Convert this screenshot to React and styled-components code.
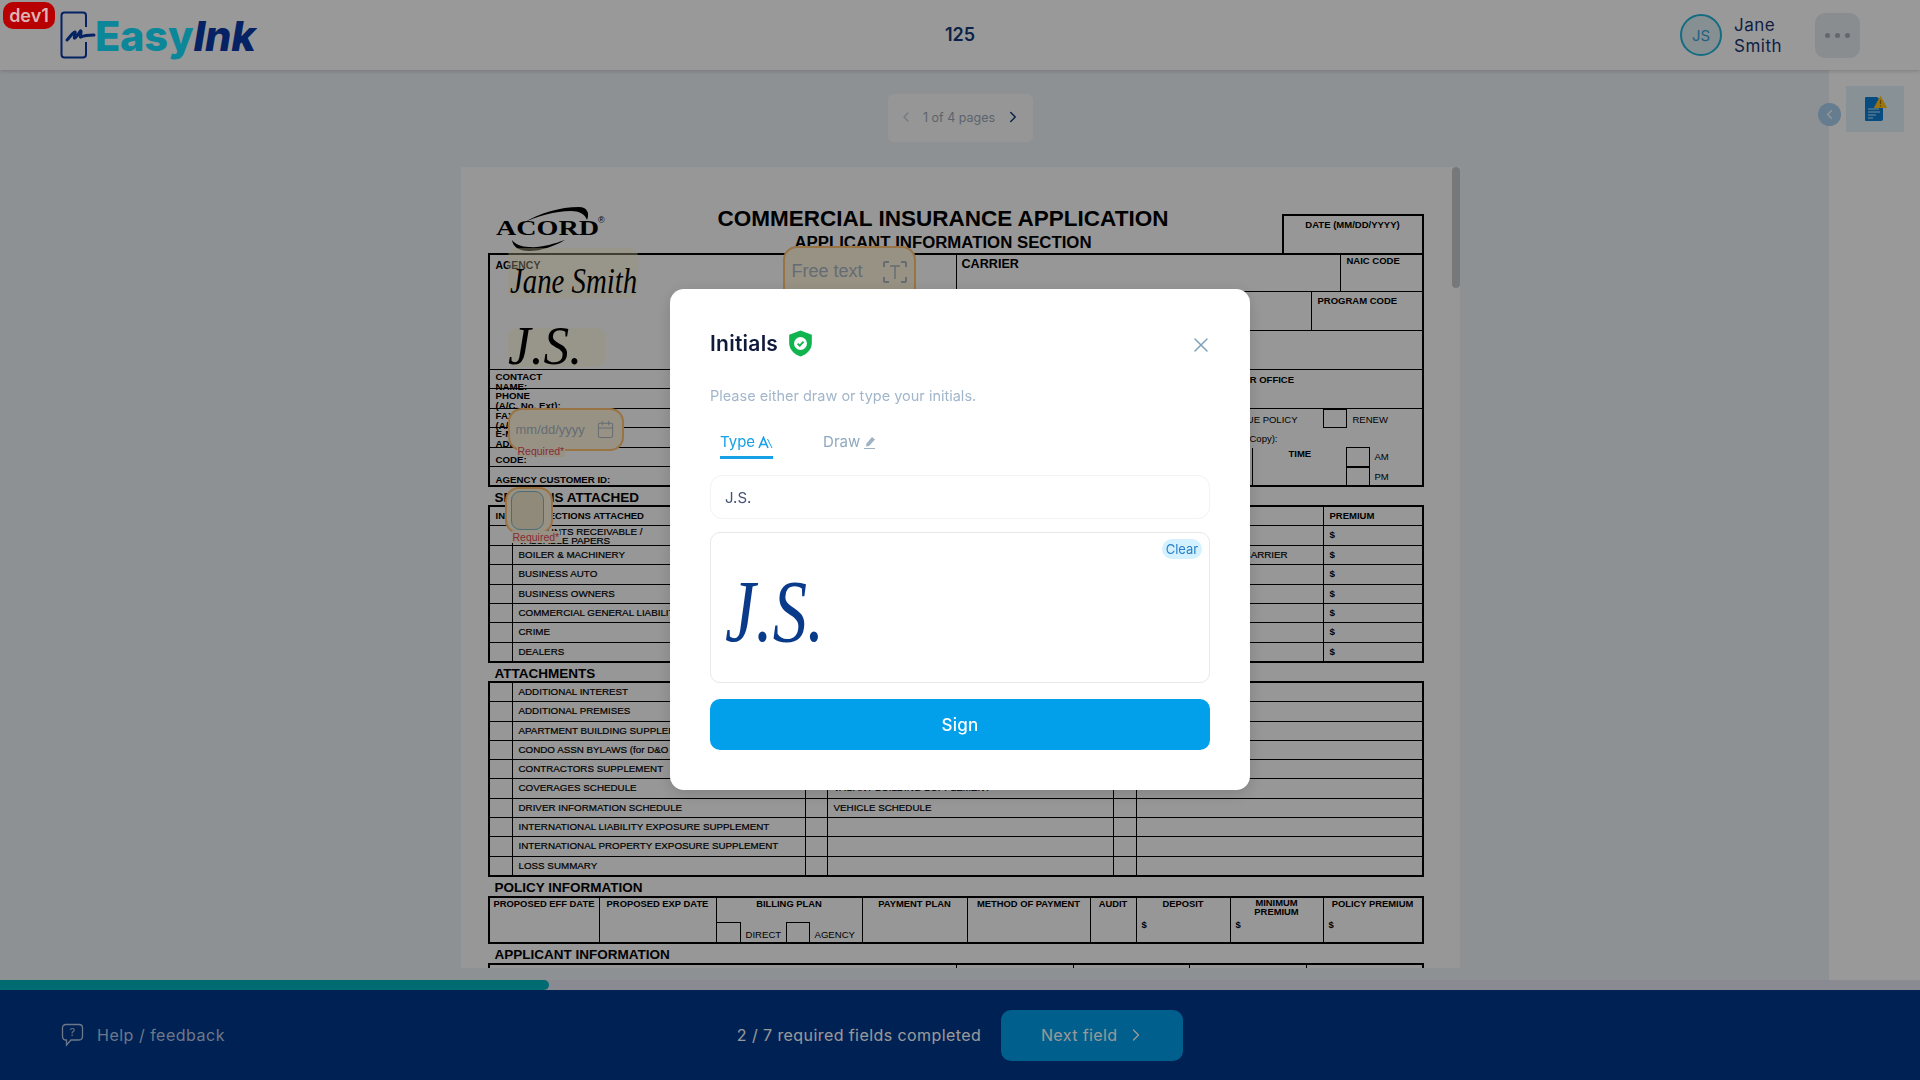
import React from 'react';
import styled, { createGlobalStyle } from 'styled-components';
import { ChevronLeft, ChevronRight, Calendar, X } from 'lucide-react';

const Global = createGlobalStyle`
  * { box-sizing: border-box; }
  html, body { margin: 0; padding: 0; height: 100%; overflow: hidden; }
  body { font-family: Inter, "Noto Sans", sans-serif; }
`;

const Shell = styled.div`
  width: 1920px; height: 1080px; display: flex; flex-direction: column; background: #edf2f7; position: relative;
`;
const Header = styled.header`
  height: 70px; flex: none; background: #fff; display: grid; grid-template-columns: 1fr auto 1fr; align-items: center;
  box-shadow: 0 1px 4px rgba(0,0,0,.18); position: relative; z-index: 1; padding: 0 60px 0 60px;
`;
const DevBadge = styled.div`
  position: absolute; left: 3px; top: 2px; width: 52px; height: 27px; border-radius: 10px; background: #b80000;
  color: #dcb4b4; font-size: 18px; font-weight: 600; display: flex; align-items: center; justify-content: center; z-index: 30;
`;
const Brand = styled.div`display: flex; align-items: center; gap: 0;`;
const BrandText = styled.div`
  font-size: 41.5px; font-weight: 800; line-height: 46px; color: #14e0ff; letter-spacing: -.2px; margin: 1px 0 0 -1px;
  em { color: #083aa7; font-style: italic; }
`;
const DocNumber = styled.div`font-size: 18px; font-weight: 600; color: #143a78; margin-top: -1px;`;
const UserArea = styled.div`display: flex; align-items: center; justify-content: flex-end;`;
const Avatar = styled.div`
  width: 42px; height: 42px; border-radius: 50%; border: 2.5px solid #22b4d8; background: #dff0f6; color: #3aa0d8;
  font-size: 15px; display: flex; align-items: center; justify-content: center;
`;
const UserName = styled.div`
  margin: 2px 0 0 12px; width: 81px; font-size: 17px; line-height: 21px; color: #1a3570; letter-spacing: .5px;
`;
const MoreButton = styled.div`
  width: 45px; height: 45px; border-radius: 10px; background: #e6ebf1; display: flex; align-items: center; justify-content: center; gap: 5px;
  span { width: 5px; height: 5px; border-radius: 50%; background: #a3adb8; }
`;

const Body = styled.div`flex: 1; min-height: 0; display: grid; grid-template-columns: 1fr 91px;`;
const Main = styled.main`
  padding: 24px 0 0 91px; display: flex; flex-direction: column; align-items: center; min-width: 0;
`;
const Pager = styled.div`
  width: 145px; height: 48px; border-radius: 6px; background: #fafbfc; display: flex; align-items: center; justify-content: center; gap: 9px;
  color: #9aa6b4; font-size: 12.5px; flex: none; padding-bottom: 2px;
`;
const Viewport = styled.div`
  margin-top: 25px; width: 999px; height: 801px; display: flex; flex: none; overflow: hidden;
`;
const Sheet = styled.div`
  width: 991px; height: 1400px; background: #fcfcfc; padding: 38px 28px 0 27px; position: relative; flex: none;
  font-family: "Liberation Sans", Arial, sans-serif; color: #000;
`;
const ScrollTrack = styled.div`width: 8px; background: #fcfcfc; flex: none;`;
const ScrollThumb = styled.div`width: 8px; height: 121px; border-radius: 4px; background: #c6c8cb;`;

const TitleBand = styled.div`display: flex; height: 48px; align-items: flex-start;`;
const LogoWrap = styled.div`margin-left: 7px; width: 112px; flex: none;`;
const TitleBlock = styled.div`margin-left: 111px; width: 451px; text-align: center; flex: none; padding-top: 2px;`;
const Title = styled.div`font-size: 22.5px; font-weight: 700; line-height: 24px; white-space: nowrap;`;
const Subtitle = styled.div`font-size: 16.8px; font-weight: 700; line-height: 20px; margin-top: 2px; white-space: nowrap;`;
const DateBox = styled.div`
  margin-left: auto; width: 142px; height: 39px; margin-top: 9px; border: 2px solid #000; border-bottom: 0;
  font-size: 9.5px; font-weight: 700; text-align: center; padding-top: 3px;
`;

const AgencyGrid = styled.div`
  display: grid; grid-template-columns: 467px 1fr; height: 234px; border: 2px solid #000;
`;
const AgencyLeft = styled.div`display: flex; flex-direction: column; border-right: 1px solid #000;`;
const AgencyRight = styled.div`display: flex; flex-direction: column;`;
const LeftRow = styled.div`
  height: ${p => p.$h}px; flex: none; padding: ${p => p.$pad || 1}px 0 0 6px; font-size: ${p => p.$size || 9.7}px; font-weight: 700; line-height: 9.5px;
  border-bottom: ${p => (p.$last ? 0 : 1)}px solid #000;
`;
const RightRow = styled.div`
  height: ${p => p.$h}px; flex: none; display: flex; border-bottom: 1px solid #000;
`;
const RightCell = styled.div`
  width: ${p => p.$w ? `${p.$w}px` : 'auto'}; flex: ${p => p.$w ? 'none' : 1}; padding: ${p => p.$top ?? 2}px 0 0 ${p => p.$left || 5}px;
  font-weight: 700; font-size: ${p => p.$size || 9.5}px; white-space: nowrap; border-right: ${p => (p.$line ? 1 : 0)}px solid #000;
`;
const StatusRow = styled.div`display: flex; height: ${p => p.$h}px; flex: none; font-size: 9.5px;`;
const StatusText = styled.div`width: ${p => p.$w}px; text-align: right; padding-top: 5px; flex: none; white-space: nowrap;`;
const Tick = styled.div`
  width: 24px; height: ${p => p.$h || 20}px; border: 1px solid #000; margin-left: ${p => p.$ml || 0}px; flex: none;
`;
const TickLabel = styled.div`margin-left: 6px; padding-top: 5px; font-size: 9.5px;`;
const TimeCell = styled.div`
  width: ${p => p.$w}px; flex: none; border-right: ${p => (p.$line ? 1 : 0)}px solid #000; font-weight: ${p => p.$bold ? 700 : 400};
  padding: 0 0 0 ${p => p.$left || 0}px;
`;
const AmColumn = styled.div`display: flex; flex-direction: column; margin-top: -1px;`;
const AmRow = styled.div`display: flex; height: 19.5px; font-size: 9.5px; align-items: center; gap: 5px;`;

const SectionHeading = styled.div`
  height: ${p => p.$h}px; font-size: 13.5px; font-weight: 700; padding-left: 7px; line-height: ${p => p.$h + 3}px; white-space: nowrap;
`;
const FormTable = styled.div`
  height: ${p => p.$h}px; border: 2px solid #000; display: flex; flex-direction: column;
`;
const TableRow = styled.div`
  flex: 1; min-height: 0; display: grid; grid-template-columns: ${p => p.$cols}; border-bottom: ${p => (p.$last ? 0 : 1)}px solid #000;
`;
const Td = styled.div`
  font-size: ${p => p.$size || 9.8}px; font-weight: ${p => p.$bold ? 700 : 400}; line-height: ${p => p.$tight ? '9px' : '18px'};
  padding-left: ${p => p.$pad ?? 6}px; border-right: ${p => (p.$noLine ? 0 : 1)}px solid #000; white-space: nowrap; overflow: hidden;
  -webkit-text-stroke: ${p => p.$bold ? 0 : '.2px'} #000;
  padding-top: ${p => p.$tight ? '1px' : 0};
`;
const PremiumHead = styled(Td)`border-left: 1px solid #000;`;
const PolicyTable = styled.div`
  height: 48px; border: 2px solid #000; display: flex;
`;
const PolicyCell = styled.div`
  width: ${p => p.$w ? `${p.$w}px` : 'auto'}; flex: ${p => p.$w ? 'none' : 1}; border-right: ${p => (p.$last ? 0 : 1)}px solid #000; position: relative; display: flex; flex-direction: column;
`;
const PolicyHead = styled.div`
  font-size: 9.4px; font-weight: 700; text-align: center; line-height: 9px; padding-top: ${p => p.$pt ?? 1}px; white-space: nowrap; height: 20px;
`;
const PolicyDollar = styled.div`font-size: 9.5px; font-weight: 700; padding: 1px 0 0 5px;`;
const BillingRow = styled.div`
  margin-top: auto; display: flex; height: 20px; font-size: 9.6px; align-items: flex-end;
`;
const BillingBox = styled.div`width: ${p => p.$w || 24}px; height: 20px; border: 1px solid #000; border-bottom: 0; border-left: ${p => p.$first ? 0 : 1}px solid #000; flex: none;`;
const BillingLabel = styled.div`width: ${p => p.$w}px; padding-left: 5px; line-height: 14px; flex: none;`;
const ApplicantTable = styled.div`
  height: 40px; border: 2px solid #000; border-bottom: 0; display: grid; grid-template-columns: 467px 117px 116px 117px 1fr;
  span { border-right: 1px solid #000; }
`;

const FieldTint = styled.div`
  position: absolute; left: ${p => p.$x}px; top: ${p => p.$y}px; width: ${p => p.$w}px; height: ${p => p.$h}px;
  background: rgba(255, 246, 205, .42); border-radius: 8px;
`;
const Script = styled.div`
  position: absolute; left: ${p => p.$x}px; top: ${p => p.$y}px; font-family: "Liberation Serif", serif; font-style: italic;
  font-size: ${p => p.$size}px; line-height: 1; white-space: nowrap; color: #000; transform-origin: left top; transform: scaleX(${p => p.$sx || 1});
`;
const InputField = styled.div`
  position: absolute; left: ${p => p.$x}px; top: ${p => p.$y}px; width: ${p => p.$w}px; height: ${p => p.$h}px;
  border: 2px solid #ffc070; border-radius: 14px; background: #fdf4dc; display: flex; align-items: ${p => p.$alignTop ? 'flex-start' : 'center'};
  justify-content: space-between; padding: ${p => p.$alignTop ? 13 : 0}px 7px 0 ${p => p.$px || 7}px; color: #a8b4c2; font-size: ${p => p.$size}px;
`;
const RequiredNote = styled.div`
  position: absolute; left: ${p => p.$x}px; top: ${p => p.$y}px; font-size: 10.5px; line-height: 12px; color: #e2485f;
  background: #fdf4dc; padding: 0 1px;
  font-family: "Liberation Sans", Arial, sans-serif;
`;
const CheckInner = styled.div`width: 40px; height: 39px; margin-left: -3px; border-radius: 9px; border: 1.5px solid #7fb6c8; background: #eee6ca;`;

const Side = styled.aside`background: #fff; padding-top: 16px; position: relative; display: flex; justify-content: flex-end; padding-right: 16px;`;
const SideTile = styled.div`width: 58px; height: 46px; background: #e3f2fb; display: flex; align-items: center; justify-content: center;`;
const CollapseBtn = styled.div`
  position: absolute; left: -11px; top: 33px; width: 23px; height: 23px; border-radius: 50%; background: #a9d0ee; color: #fff;
  display: flex; align-items: center; justify-content: center;
`;

const Progress = styled.div`height: 10px; flex: none; background: #e4e6f3;`;
const ProgressFill = styled.div`height: 100%; border-radius: 0 6px 6px 0; background: #00b2bb;`;
const Footer = styled.footer`
  height: 90px; flex: none; background: #00378c; display: grid; grid-template-columns: 1fr auto 1fr; align-items: center; padding-left: 61px;
`;
const HelpLink = styled.div`display: flex; align-items: center; gap: 13px; color: #b5c8e4; font-size: 16px; letter-spacing: .5px;`;
const FooterCenter = styled.div`display: flex; align-items: center; gap: 20px; margin-left: -61px;`;
const FooterCount = styled.div`color: #fff; font-size: 16px; letter-spacing: .42px;`;
const NextButton = styled.div`
  width: 182px; height: 51px; border-radius: 10px; background: #009ee9; color: #fff; font-size: 16px; letter-spacing: .4px;
  display: flex; align-items: center; justify-content: center; gap: 8px; padding-left: 2px;
`;

const Overlay = styled.div`
  position: fixed; inset: 0; background: rgba(0,0,0,.4); display: flex; align-items: center; justify-content: center; z-index: 20;
`;
const Modal = styled.div`
  width: 580px; background: #fff; border-radius: 14px; padding: 40px; box-shadow: 0 4px 16px rgba(0,0,0,.15); margin-bottom: 1px;
`;
const ModalHead = styled.div`height: 28px; display: flex; align-items: center; justify-content: space-between;`;
const ModalTitle = styled.div`display: flex; align-items: center; gap: 10px; font-size: 21px; font-weight: 600; color: #0f1a3a; letter-spacing: .25px;`;
const CloseBtn = styled.div`color: #7fa2bc; display: flex; margin: 4px -3px 0 0;`;
const Hint = styled.div`margin-top: 29px; height: 20px; line-height: 20px; font-size: 14.5px; color: #a2b6cb;`;
const Tabs = styled.div`margin-top: 24px; display: flex; gap: 50px; padding-left: 10px;`;
const Tab = styled.div`
  height: 29px; display: flex; align-items: flex-start; gap: 3px; line-height: 24px; font-size: 15px;
  color: ${p => p.$active ? '#16a0e6' : '#8fa8bf'}; border-bottom: 3px solid ${p => p.$active ? '#16a0e6' : 'transparent'};
  svg { margin-top: 6px; }
`;
const TextInput = styled.div`
  margin-top: 16px; height: 44px; border: 1px solid #f1f3f6; border-radius: 12px; padding-left: 14px; display: flex; align-items: center;
  font-size: 15px; color: #435474;
`;
const SignBox = styled.div`
  margin-top: 13px; height: 151px; border: 1.5px solid #e6e8ec; border-radius: 10px; position: relative; overflow: hidden;
`;
const ClearChip = styled.div`
  position: absolute; top: 6px; right: 7px; width: 40px; height: 20px; border-radius: 10px; background: #d3f1fe; color: #2a80c8; font-size: 13px;
  display: flex; align-items: center; justify-content: center;
`;
const SignPreview = styled.div`
  position: absolute; left: 14px; top: 35px; font-family: "Liberation Serif", serif; font-style: italic; font-size: 88px; line-height: 88px;
  color: #0a3a8a; transform-origin: left top; transform: scaleX(.78); white-space: nowrap;
`;
const SignButton = styled.div`
  margin-top: 16px; height: 51px; border-radius: 10px; background: #02a0ea; color: #fff; font-size: 17px; font-weight: 500;
  display: flex; align-items: center; justify-content: center; letter-spacing: .3px;
`;

const BrandMark = () => (
  <svg width="36" height="48" viewBox="0 0 36 48" fill="none">
    <path d="M26 16V4.5Q26 1.5 23 1.5H4.5Q1.5 1.5 1.5 4.5V43.5Q1.5 46.5 4.5 46.5H23Q26 46.5 26 43.5V31" stroke="#083aa7" strokeWidth="2" />
    <path d="M7 29C10 26 13 21 15 21C16 21 13 28 15 27C18 25 20 19 21 20C22 21 19 27 21 26C23 25 29 24 34 24" stroke="#083aa7" strokeWidth="3" strokeLinecap="round" strokeLinejoin="round" />
  </svg>
);
const AcordLogo = () => (
  <svg width="112" height="47" viewBox="0 0 112 47">
    <path d="M28 18C45 8 65 2 84 2C92 2 95 8 92 15C90 9 84 6 76 6C60 6 42 11 28 18Z" fill="#000" />
    <path d="M17 35C18 42 24 46 34 46C46 46 60 41 70 35C58 39 46 43 34 42C26 42 20 39 17 35Z" fill="#000" />
    <text x="1" y="30" fontFamily="Liberation Serif, serif" fontWeight="700" fontSize="20" textLength="103" lengthAdjust="spacingAndGlyphs" fill="#000">ACORD</text>
    <text x="103" y="18" fontFamily="Liberation Sans, sans-serif" fontSize="9" fill="#000">®</text>
  </svg>
);
const Shield = () => (
  <svg width="25" height="27" viewBox="0 0 23 25">
    <path d="M11.5 0.5L22 4.5V12C22 18 17.5 22.5 11.5 24.5C5.5 22.5 1 18 1 12V4.5Z" fill="#10b54f" />
    <circle cx="11.5" cy="12.5" r="6" fill="#fff" />
    <path d="M8.8 12.6L10.8 14.5L14.3 10.8" stroke="#10b54f" strokeWidth="1.6" fill="none" />
  </svg>
);
const FontMark = () => (
  <svg width="15" height="13" viewBox="0 0 15 13" fill="none" stroke="#16a0e6" strokeWidth="1.6">
    <path d="M1 12L5.5 1.5L10 12M2.8 8.5H8.2" />
    <path d="M9.5 3L14 12" strokeWidth="1" />
  </svg>
);
const PenMark = () => (
  <svg width="13" height="14" viewBox="0 0 13 14" fill="#9fb2c4">
    <path d="M9 1L12 3.5L6 10L3 10.5L3.5 7.5Z" />
    <path d="M1 12.5H12" stroke="#9fb2c4" strokeWidth="1" />
  </svg>
);
const TextFieldIcon = () => (
  <svg width="24" height="22" viewBox="0 0 24 22" fill="none" stroke="#a8b4c2" strokeWidth="2">
    <path d="M1 6V2Q1 1 2 1H6M18 1H22Q23 1 23 2V6M23 16V20Q23 21 22 21H18M6 21H2Q1 21 1 20V16" />
    <path d="M7 5H17M12 5V18" strokeWidth="1.4" />
  </svg>
);
const DocAlert = () => (
  <svg width="24" height="26" viewBox="0 0 24 26">
    <path d="M2 2Q2 1 3 1H14L20 6V23Q20 25 18 25H3Q2 25 2 24Z" fill="#0a7fd6" />
    <path d="M5 13H16M5 16H17M5 19H13M5 22H10" stroke="#cfe8fa" strokeWidth="1.2" />
    <path d="M17.5 0.5L23.5 11.5H11.5Z" fill="#ffc21a" stroke="#ffc21a" strokeLinejoin="round" />
    <path d="M17.5 4V8M17.5 9.2V10.4" stroke="#a86a00" strokeWidth="1.2" />
  </svg>
);
const HelpIcon = () => (
  <svg width="23" height="24" viewBox="0 0 23 24" fill="none" stroke="#b5c8e4" strokeWidth="1.3">
    <path d="M5 1.5H18Q21.5 1.5 21.5 5V13Q21.5 17 18 17H10L5.5 22V17H5Q1.5 17 1.5 13V5Q1.5 1.5 5 1.5Z" />
    <text x="11.5" y="13" fontSize="11" textAnchor="middle" fill="#b5c8e4" stroke="none" fontFamily="Inter, sans-serif">?</text>
  </svg>
);

const secCols = '23px 293px 22px 286px 23px 187px 1fr';
const sections = [
  ['BOILER & MACHINERY', 'ELECTRONIC DATA PROC', 'TRUCKERS / MOTOR CARRIER'],
  ['BUSINESS AUTO', 'ENVIRONMENTAL', 'UMBRELLA'],
  ['BUSINESS OWNERS', 'EQUIPMENT FLOATER', 'YACHT'],
  ['COMMERCIAL GENERAL LIABILITY', 'GARAGE AND DEALERS', ''],
  ['CRIME', 'INSTALLATION', ''],
  ['DEALERS', 'OPEN CARGO', ''],
];
const attCols = '23px 293px 22px 286px 23px 1fr';
const attachments = [
  ['ADDITIONAL INTEREST', 'PROFESSIONAL LIABILITY'],
  ['ADDITIONAL PREMISES', 'RESTAURANT SUPPLEMENT'],
  ['APARTMENT BUILDING SUPPLEMENT', 'STATEMENT OF VALUES'],
  ['CONDO ASSN BYLAWS (for D&O Coverage only)', 'STATE SUPPLEMENT'],
  ['CONTRACTORS SUPPLEMENT', 'SWIMMING POOL'],
  ['COVERAGES SCHEDULE', 'VACANT BUILDING SUPPLEMENT'],
  ['DRIVER INFORMATION SCHEDULE', 'VEHICLE SCHEDULE'],
  ['INTERNATIONAL LIABILITY EXPOSURE SUPPLEMENT', ''],
  ['INTERNATIONAL PROPERTY EXPOSURE SUPPLEMENT', ''],
  ['LOSS SUMMARY', ''],
];
const policyCols = [
  { w: 110, head: 'PROPOSED EFF DATE' },
  { w: 117, head: 'PROPOSED EXP DATE' },
  { w: 146, head: 'BILLING PLAN', billing: true },
  { w: 105, head: 'PAYMENT PLAN' },
  { w: 123, head: 'METHOD OF PAYMENT' },
  { w: 46, head: 'AUDIT' },
  { w: 94, head: 'DEPOSIT', dollar: true },
  { w: 93, head: ['MINIMUM', 'PREMIUM'], dollar: true },
  { head: 'POLICY PREMIUM', dollar: true, last: true },
];

export default function App() {
  return (
    <Shell>
      <Global />
      <DevBadge>dev1</DevBadge>
      <Header>
        <Brand>
          <BrandMark />
          <BrandText>Easy<em>Ink</em></BrandText>
        </Brand>
        <DocNumber>125</DocNumber>
        <UserArea>
          <Avatar>JS</Avatar>
          <UserName>Jane Smith</UserName>
          <MoreButton><span /><span /><span /></MoreButton>
        </UserArea>
      </Header>
      <Body>
        <Main>
          <Pager>
            <ChevronLeft size={16} color="#c3ccd6" />
            1 of 4 pages
            <ChevronRight size={18} color="#143a78" />
          </Pager>
          <Viewport>
            <Sheet>
              <TitleBand>
                <LogoWrap><AcordLogo /></LogoWrap>
                <TitleBlock>
                  <Title>COMMERCIAL INSURANCE APPLICATION</Title>
                  <Subtitle>APPLICANT INFORMATION SECTION</Subtitle>
                </TitleBlock>
                <DateBox>DATE (MM/DD/YYYY)</DateBox>
              </TitleBand>
              <AgencyGrid>
                <AgencyLeft>
                  <LeftRow $h={115} $pad={6} $size={10.5}>AGENCY</LeftRow>
                  <LeftRow $h={19} $pad={2}>CONTACT<br />NAME:</LeftRow>
                  <LeftRow $h={20} $pad={2}>PHONE<br />(A/C, No, Ext):</LeftRow>
                  <LeftRow $h={19} $pad={2}>FAX<br />(A/C, No):</LeftRow>
                  <LeftRow $h={20} $pad={1}>E-MAIL<br />ADDRESS:</LeftRow>
                  <LeftRow $h={19} $pad={7}>CODE:</LeftRow>
                  <LeftRow $h={20} $last $pad={8}>AGENCY CUSTOMER ID:</LeftRow>
                </AgencyLeft>
                <AgencyRight>
                  <RightRow $h={37}>
                    <RightCell $w={384} $line $size={12.6}>CARRIER</RightCell>
                    <RightCell $left={6} $top={0}>NAIC CODE</RightCell>
                  </RightRow>
                  <RightRow $h={39}>
                    <RightCell $w={355} $line>COMPANY POLICY OR PROGRAM NAME</RightCell>
                    <RightCell $left={6} $top={3}>PROGRAM CODE</RightCell>
                  </RightRow>
                  <RightRow $h={39}><RightCell>POLICY NUMBER</RightCell></RightRow>
                  <RightRow $h={39}>
                    <RightCell $w={227} $line $top={4}>UNDERWRITER</RightCell>
                    <RightCell $left={2} $top={4}>UNDERWRITER OFFICE</RightCell>
                  </RightRow>
                  <StatusRow $h={19}>
                    <StatusText $w={341}>ISSUE POLICY</StatusText>
                    <Tick $ml={25} $h={19} />
                    <TickLabel>RENEW</TickLabel>
                  </StatusRow>
                  <StatusRow $h={20}>
                    <StatusText $w={321}>STATUS OF TRANSACTION (Signed Copy):</StatusText>
                  </StatusRow>
                  <StatusRow $h={37}>
                    <TimeCell $w={296} $line>DATE</TimeCell>
                    <TimeCell $w={93} $bold $left={36}>TIME</TimeCell>
                    <AmColumn>
                      <AmRow><Tick $h={19.5} />AM</AmRow>
                      <AmRow><Tick $h={19.5} />PM</AmRow>
                    </AmColumn>
                  </StatusRow>
                </AgencyRight>
              </AgencyGrid>

              <SectionHeading $h={18}>SECTIONS ATTACHED</SectionHeading>
              <FormTable $h={158}>
                <TableRow $cols="663px 170px 1fr">
                  <Td $bold $size={9.5} $noLine>INDICATE SECTIONS ATTACHED</Td>
                  <Td $noLine />
                  <PremiumHead $bold $size={9.5} $noLine>PREMIUM</PremiumHead>
                </TableRow>
                <TableRow $cols={secCols}>
                  <Td />
                  <Td $tight>ACCOUNTS RECEIVABLE /<br />VALUABLE PAPERS</Td>
                  <Td />
                  <Td $tight>DATA PROCESSING</Td>
                  <Td />
                  <Td $tight><br />STAFF LEASING (D&amp;O)</Td>
                  <Td $noLine $bold>$</Td>
                </TableRow>
                {sections.map((r, i) => (
                  <TableRow key={r[0]} $cols={secCols} $last={i === sections.length - 1}>
                    <Td />
                    <Td>{r[0]}</Td>
                    <Td />
                    <Td>{r[1]}</Td>
                    <Td />
                    <Td>{r[2]}</Td>
                    <Td $noLine $bold>$</Td>
                  </TableRow>
                ))}
              </FormTable>

              <SectionHeading $h={18}>ATTACHMENTS</SectionHeading>
              <FormTable $h={196}>
                {attachments.map((r, i) => (
                  <TableRow key={r[0]} $cols={attCols} $last={i === attachments.length - 1}>
                    <Td />
                    <Td>{r[0]}</Td>
                    <Td />
                    <Td>{r[1]}</Td>
                    <Td />
                    <Td $noLine />
                  </TableRow>
                ))}
              </FormTable>

              <SectionHeading $h={19}>POLICY INFORMATION</SectionHeading>
              <PolicyTable>
                {policyCols.map(c => (
                  <PolicyCell key={String(c.head)} $w={c.w} $last={c.last}>
                    {Array.isArray(c.head)
                      ? <PolicyHead $pt={0}>{c.head[0]}<br />{c.head[1]}</PolicyHead>
                      : <PolicyHead>{c.head}</PolicyHead>}
                    {c.dollar && <PolicyDollar>$</PolicyDollar>}
                    {c.billing && (
                      <BillingRow>
                        <BillingBox $first />
                        <BillingLabel $w={45}>DIRECT</BillingLabel>
                        <BillingBox />
                        <BillingLabel $w={52}>AGENCY</BillingLabel>
                      </BillingRow>
                    )}
                  </PolicyCell>
                ))}
              </PolicyTable>

              <SectionHeading $h={19}>APPLICANT INFORMATION</SectionHeading>
              <ApplicantTable><span /><span /><span /><span /><i /></ApplicantTable>

              <FieldTint $x={47} $y={81} $w={130} $h={50} />
              <Script $x={49} $y={96} $size={36} $sx={.8}>Jane Smith</Script>
              <FieldTint $x={47} $y={161} $w={97} $h={39} />
              <Script $x={47} $y={152} $size={54} $sx={.95}>J.S.</Script>
              <InputField $x={322} $y={79} $w={133} $h={66} $size={18} $alignTop>
                Free text <TextFieldIcon />
              </InputField>
              <InputField $x={47} $y={241} $w={116} $h={43} $size={13} $px={6}>
                mm/dd/yyyy <Calendar size={19} strokeWidth={1.3} />
              </InputField>
              <RequiredNote $x={56} $y={278}>Required*</RequiredNote>
              <InputField $x={44} $y={320} $w={48} $h={47} $size={12}>
                <CheckInner />
              </InputField>
              <RequiredNote $x={51} $y={364}>Required*</RequiredNote>
            </Sheet>
            <ScrollTrack><ScrollThumb /></ScrollTrack>
          </Viewport>
        </Main>
        <Side>
          <CollapseBtn><ChevronLeft size={15} /></CollapseBtn>
          <SideTile><DocAlert /></SideTile>
        </Side>
      </Body>
      <Progress><ProgressFill style={{ width: 549 }} /></Progress>
      <Footer>
        <HelpLink><HelpIcon />Help / feedback</HelpLink>
        <FooterCenter>
          <FooterCount>2 / 7 required fields completed</FooterCount>
          <NextButton>Next field <ChevronRight size={20} strokeWidth={1.6} /></NextButton>
        </FooterCenter>
        <div />
      </Footer>
      <Overlay>
        <Modal>
          <ModalHead>
            <ModalTitle>Initials <Shield /></ModalTitle>
            <CloseBtn><X size={24} strokeWidth={1.5} /></CloseBtn>
          </ModalHead>
          <Hint>Please either draw or type your initials.</Hint>
          <Tabs>
            <Tab $active>Type <FontMark /></Tab>
            <Tab>Draw <PenMark /></Tab>
          </Tabs>
          <TextInput>J.S.</TextInput>
          <SignBox>
            <ClearChip>Clear</ClearChip>
            <SignPreview>J.S.</SignPreview>
          </SignBox>
          <SignButton>Sign</SignButton>
        </Modal>
      </Overlay>
    </Shell>
  );
}
